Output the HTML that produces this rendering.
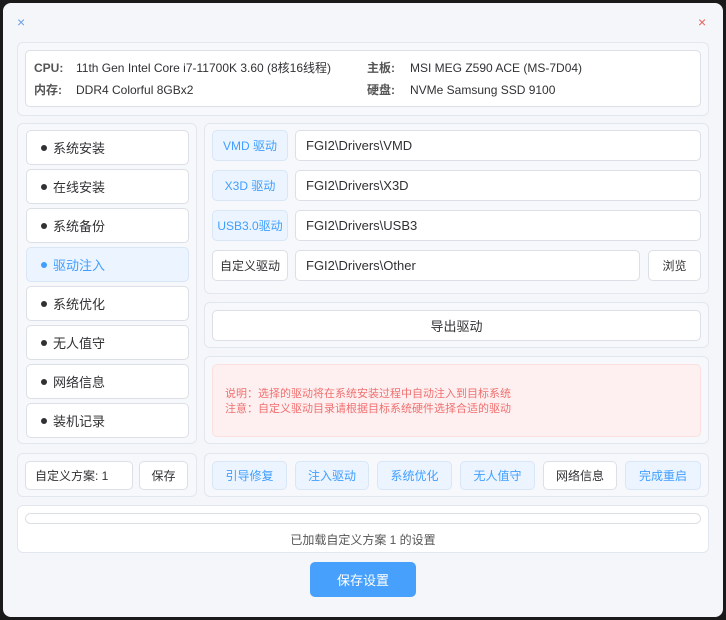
<!DOCTYPE html>
<html><head><meta charset="utf-8"><style>
*{box-sizing:border-box;margin:0;padding:0}
body{width:726px;height:620px;background:#1a1a1a;font-family:"Liberation Sans","Noto Sans CJK SC",sans-serif;font-size:12px;color:#303133;position:relative;overflow:hidden}
.win{position:absolute;left:3px;top:3px;width:720px;height:614px;background:#f4f6fa;border-radius:8px}
.a{position:absolute}
.card{position:absolute;background:#f7f8fb;border:1px solid #e2e6ee;border-radius:6px}
.box{position:absolute;background:#fff;border:1px solid #dcdfe6;border-radius:5px}
.btn{position:absolute;border:1px solid #dcdfe6;border-radius:5px;background:#fff;display:flex;align-items:center;justify-content:center;font-size:12px}
.bl{background:#ecf5ff;border-color:#d9e6f5;color:#409eff}
.inp{position:absolute;background:#fff;border:1px solid #dcdfe6;border-radius:5px;padding-left:10px;display:flex;align-items:center;font-size:13px}
.nav{position:absolute;left:26px;width:163px;height:35px;background:#fff;border:1px solid #dcdfe6;border-radius:5px;padding-left:14px;display:flex;align-items:center;font-size:13px}
.nav b{display:inline-block;width:6px;height:6px;border-radius:50%;background:#303133;margin-right:6px}
.nav.on{background:#ecf5ff;color:#409eff;border-color:#d9e6f5}
.nav.on b{background:#409eff}
</style></head><body>
<div class="win"></div>
<div class="a" style="left:17px;top:14px;color:#6aa0e8;font-size:14px">×</div>
<div class="a" style="left:698px;top:14px;color:#e8605c;font-size:14px">×</div>

<div class="card" style="left:17px;top:42px;width:692px;height:74px"></div>
<div class="box" style="left:25px;top:50px;width:676px;height:57px"></div>
<div class="a" style="left:34px;top:60px;font-size:12px;line-height:16px;font-weight:bold;color:#555">CPU:</div>
<div class="a" style="left:76px;top:60px;line-height:16px">11th Gen Intel Core i7-11700K 3.60 (8核16线程)</div>
<div class="a" style="left:34px;top:82px;line-height:16px;font-weight:bold;color:#555">内存:</div>
<div class="a" style="left:76px;top:82px;line-height:16px">DDR4 Colorful 8GBx2</div>
<div class="a" style="left:367px;top:60px;line-height:16px;font-weight:bold;color:#555">主板:</div>
<div class="a" style="left:410px;top:60px;line-height:16px">MSI MEG Z590 ACE (MS-7D04)</div>
<div class="a" style="left:367px;top:82px;line-height:16px;font-weight:bold;color:#555">硬盘:</div>
<div class="a" style="left:410px;top:82px;line-height:16px">NVMe Samsung SSD 9100</div>

<div class="card" style="left:17px;top:123px;width:180px;height:321px"></div>
<div class="nav" style="top:130px"><b></b>系统安装</div>
<div class="nav" style="top:169px"><b></b>在线安装</div>
<div class="nav" style="top:208px"><b></b>系统备份</div>
<div class="nav on" style="top:247px"><b></b>驱动注入</div>
<div class="nav" style="top:286px"><b></b>系统优化</div>
<div class="nav" style="top:325px"><b></b>无人值守</div>
<div class="nav" style="top:364px"><b></b>网络信息</div>
<div class="nav" style="top:403px"><b></b>装机记录</div>

<div class="card" style="left:204px;top:123px;width:505px;height:171px"></div>
<div class="btn bl" style="left:212px;top:130px;width:76px;height:31px">VMD 驱动</div>
<div class="inp" style="left:295px;top:130px;width:406px;height:31px">FGI2\Drivers\VMD</div>
<div class="btn bl" style="left:212px;top:170px;width:76px;height:31px">X3D 驱动</div>
<div class="inp" style="left:295px;top:170px;width:406px;height:31px">FGI2\Drivers\X3D</div>
<div class="btn bl" style="left:212px;top:210px;width:76px;height:31px">USB3.0驱动</div>
<div class="inp" style="left:295px;top:210px;width:406px;height:31px">FGI2\Drivers\USB3</div>
<div class="btn" style="left:212px;top:250px;width:76px;height:31px">自定义驱动</div>
<div class="inp" style="left:295px;top:250px;width:345px;height:31px">FGI2\Drivers\Other</div>
<div class="btn" style="left:648px;top:250px;width:53px;height:31px">浏览</div>

<div class="card" style="left:204px;top:302px;width:505px;height:46px"></div>
<div class="btn" style="left:212px;top:310px;width:489px;height:31px;font-size:13px">导出驱动</div>

<div class="card" style="left:204px;top:356px;width:505px;height:88px"></div>
<div class="a" style="left:212px;top:364px;width:489px;height:73px;background:#fef0f0;border:1px solid #fbe0e0;border-radius:5px;color:#f07070;font-size:11px;line-height:15px;padding:22px 0 0 12px">说明：选择的驱动将在系统安装过程中自动注入到目标系统<br>注意：自定义驱动目录请根据目标系统硬件选择合适的驱动</div>

<div class="card" style="left:17px;top:453px;width:180px;height:44px"></div>
<div class="inp" style="left:25px;top:461px;width:108px;height:29px;padding-left:9px;font-size:12px">自定义方案: 1</div>
<div class="btn" style="left:139px;top:461px;width:49px;height:29px">保存</div>

<div class="card" style="left:204px;top:453px;width:505px;height:44px"></div>
<div class="btn bl" style="left:212px;top:461px;width:75px;height:29px">引导修复</div>
<div class="btn bl" style="left:295px;top:461px;width:74px;height:29px">注入驱动</div>
<div class="btn bl" style="left:377px;top:461px;width:75px;height:29px">系统优化</div>
<div class="btn bl" style="left:460px;top:461px;width:75px;height:29px">无人值守</div>
<div class="btn" style="left:543px;top:461px;width:74px;height:29px">网络信息</div>
<div class="btn bl" style="left:625px;top:461px;width:76px;height:29px">完成重启</div>

<div class="card" style="left:17px;top:505px;width:692px;height:48px;background:#fff"></div>
<div class="a" style="left:25px;top:513px;width:676px;height:11px;border:1px solid #dcdfe6;border-radius:6px;background:#fff"></div>
<div class="a" style="left:17px;top:531px;width:692px;text-align:center;font-size:12px;color:#555">已加载自定义方案 1 的设置</div>

<div class="btn" style="left:310px;top:562px;width:106px;height:35px;background:#46a0fc;border-color:#46a0fc;color:#fff;font-size:13px">保存设置</div>
</body></html>
